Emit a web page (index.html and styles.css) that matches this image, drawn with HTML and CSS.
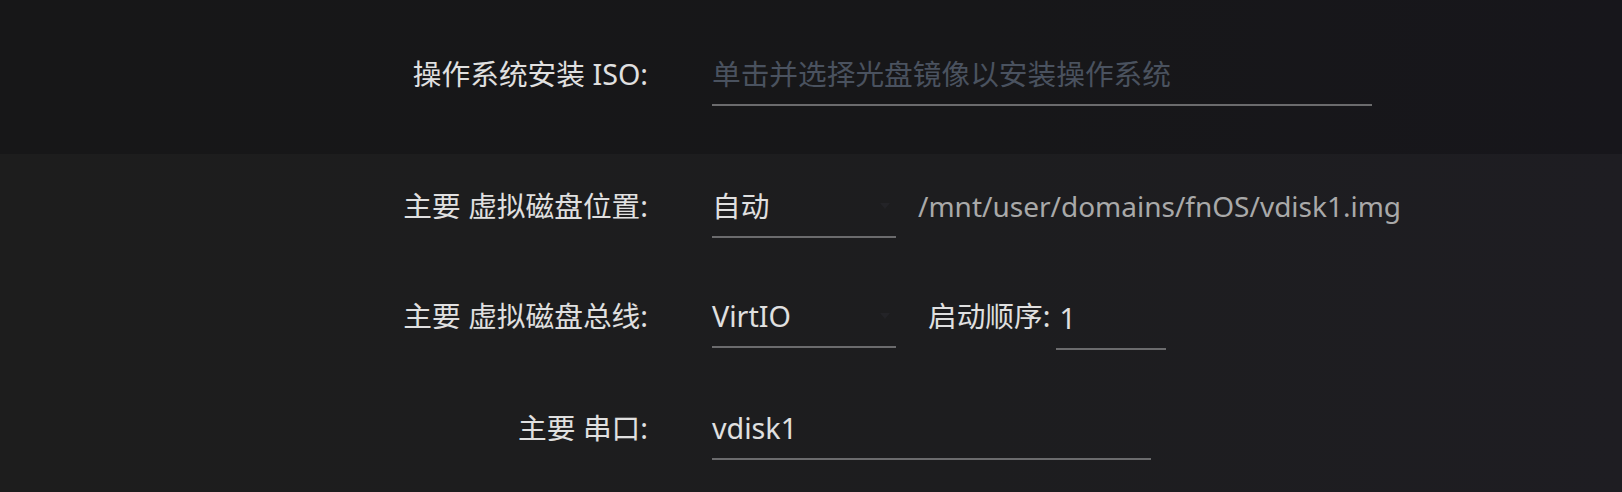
FILE: index.html
```html
<!DOCTYPE html>
<html lang="zh-CN">
<head>
<meta charset="utf-8">
<title>VM 磁盘设置</title>
<link rel="stylesheet" href="styles.css">
</head>
<body>
<div class="page">
  <section class="sec sec-iso">
    <div class="row">
      <div class="lbl">操作系统安装 ISO:</div>
      <div class="cell">
        <div class="field field-iso"><span class="ph">单击并选择光盘镜像以安装操作系统</span></div>
      </div>
    </div>
  </section>
  <section class="sec sec-disk">
    <div class="row">
      <div class="lbl">主要 虚拟磁盘位置:</div>
      <div class="cell">
        <div class="field select"><span class="val">自动</span><span class="caret"></span></div>
        <span class="path">/mnt/user/domains/fnOS/vdisk1.img</span>
      </div>
    </div>
    <div class="row">
      <div class="lbl">主要 虚拟磁盘总线:</div>
      <div class="cell">
        <div class="field select"><span class="val">VirtIO</span><span class="caret"></span></div>
        <span class="sub-lbl">启动顺序:</span>
        <div class="field field-order"><span class="val">1</span></div>
      </div>
    </div>
    <div class="row">
      <div class="lbl">主要 串口:</div>
      <div class="cell">
        <div class="field field-serial"><span class="val">vdisk1</span></div>
      </div>
    </div>
  </section>
</div>
</body>
</html>
```

FILE: styles.css
```css
html, body {
  margin: 0;
  padding: 0;
  background: #1d1d1f;
}

body {
  font-family: "Noto Sans", "Noto Sans CJK SC", sans-serif;
  font-size: 28.7px;
  color: #e2e2e2;
  width: 1622px;
  height: 492px;
  overflow: hidden;
}

.page {
  display: flex;
  flex-direction: column;
  height: 492px;
}

.sec {
  display: flex;
  flex-direction: column;
  gap: 58px;
}

.sec-iso {
  background: linear-gradient(90deg, #171718 0%, #171719 60%, #17161b 100%);
  padding: 54px 0 48px;
}

.sec-disk {
  flex: 1;
  background: linear-gradient(90deg, #1d1d1d 0%, #1d1d1f 60%, #1e1d22 100%);
  padding-top: 32px;
}

.row {
  display: grid;
  grid-template-columns: 648px 1fr;
  column-gap: 64px;
  align-items: start;
}

.lbl {
  text-align: right;
  line-height: 40px;
  white-space: nowrap;
  color: #e0e0e0;
}

.cell {
  display: flex;
  align-items: flex-start;
}

.field {
  display: flex;
  align-items: center;
  justify-content: space-between;
  height: 40px;
  line-height: 40px;
  padding-bottom: 10px;
  border-bottom: 2px solid #6b6b6d;
  white-space: nowrap;
}

.field-iso {
  width: 660px;
}

.ph {
  color: #4a525f;
}

.select {
  width: 184px;
}

.val {
  color: #e0e0e0;
}

.caret {
  width: 0;
  height: 0;
  margin-right: 6px;
  border-left: 5px solid transparent;
  border-right: 5px solid transparent;
  border-top: 6px solid #232327;
}

.path {
  margin-left: 22px;
  line-height: 40px;
  font-size: 28px;
  color: #a9a9a9;
  white-space: nowrap;
}

.sub-lbl {
  margin-left: 32px;
  line-height: 40px;
  color: #e0e0e0;
  white-space: nowrap;
}

.field-order {
  width: 107px;
  margin-left: 6px;
  padding-left: 3px;
  margin-top: 2px;
}

.field-serial {
  width: 439px;
}
```
